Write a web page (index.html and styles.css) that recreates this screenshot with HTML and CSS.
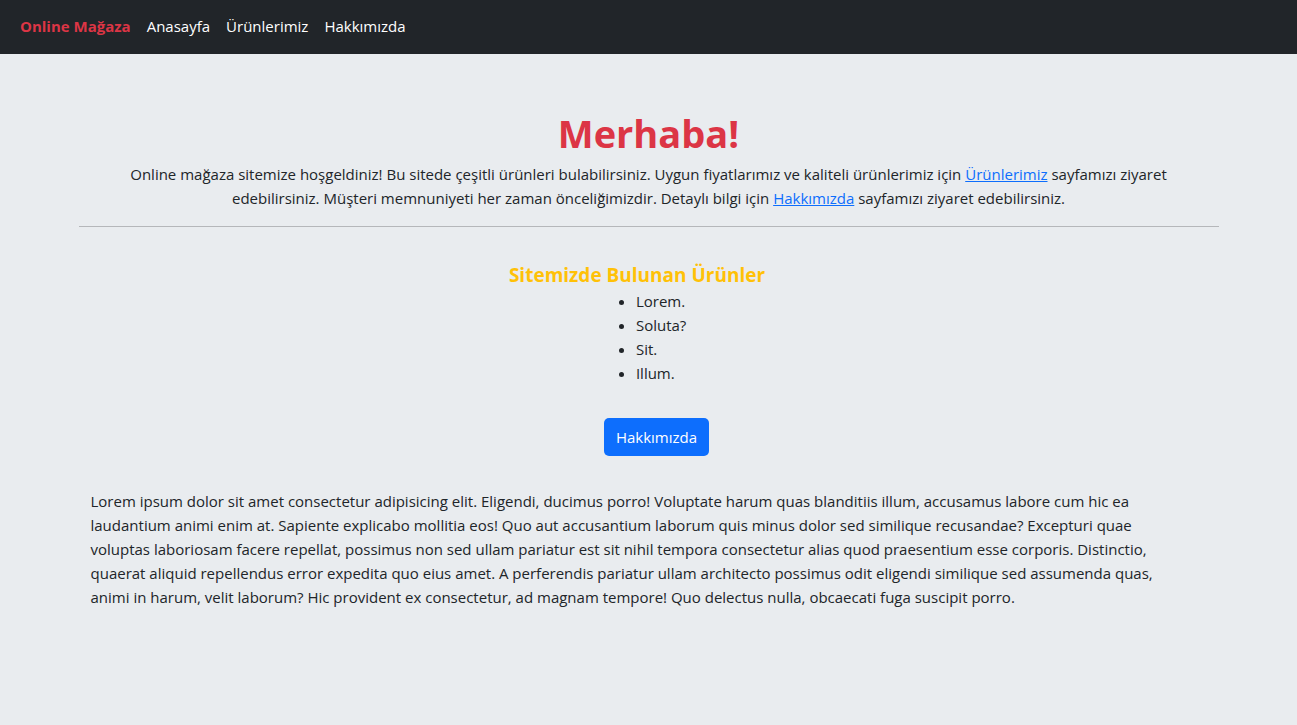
FILE: index.html
```html
<!DOCTYPE html>
<html lang="tr">
<head>
<meta charset="utf-8">
<title>Online Mağaza</title>
<link rel="stylesheet" href="styles.css">
</head>
<body>
<nav class="navbar">
  <a class="brand" href="#">Online Mağaza</a>
  <a class="nav-link" href="#">Anasayfa</a>
  <a class="nav-link" href="#">Ürünlerimiz</a>
  <a class="nav-link" href="#">Hakkımızda</a>
</nav>
<main class="container">
  <header class="hero">
    <h1 class="hero-title">Merhaba!</h1>
    <p class="hero-text">Online mağaza sitemize hoşgeldiniz! Bu sitede çeşitli ürünleri bulabilirsiniz. Uygun fiyatlarımız ve kaliteli ürünlerimiz için <a href="#">Ürünlerimiz</a> sayfamızı ziyaret edebilirsiniz. Müşteri memnuniyeti her zaman önceliğimizdir. Detaylı bilgi için <a href="#">Hakkımızda</a> sayfamızı ziyaret edebilirsiniz.</p>
  </header>
  <hr class="divider">
  <section class="products">
    <h5 class="products-title">Sitemizde Bulunan Ürünler</h5>
    <div class="products-body">
      <ul class="product-list">
        <li>Lorem.</li>
        <li>Soluta?</li>
        <li>Sit.</li>
        <li>Illum.</li>
      </ul>
      <a class="btn" href="#">Hakkımızda</a>
    </div>
  </section>
  <p class="lorem">Lorem ipsum dolor sit amet consectetur adipisicing elit. Eligendi, ducimus porro! Voluptate harum quas blanditiis illum, accusamus labore cum hic ea laudantium animi enim at. Sapiente explicabo mollitia eos! Quo aut accusantium laborum quis minus dolor sed similique recusandae? Excepturi quae voluptas laboriosam facere repellat, possimus non sed ullam pariatur est sit nihil tempora consectetur alias quod praesentium esse corporis. Distinctio, quaerat aliquid repellendus error expedita quo eius amet. A perferendis pariatur ullam architecto possimus odit eligendi similique sed assumenda quas, animi in harum, velit laborum? Hic provident ex consectetur, ad magnam tempore! Quo delectus nulla, obcaecati fuga suscipit porro.</p>
</main>
</body>
</html>
```

FILE: styles.css
```css
* { box-sizing: border-box; }
html, body { margin: 0; }
body {
  background: #e9ecef;
  color: #212529;
  font-family: "Open Sans", "Noto Sans", sans-serif;
  font-size: 15px;
  line-height: 24px;
}
.navbar {
  height: 54px;
  background: #212529;
  display: flex;
  align-items: center;
  gap: 16px;
  padding: 0 20px 2px;
}
.navbar a { text-decoration: none; font-size: 15px; }
.brand { color: #dc3545; font-weight: 700; }
.nav-link { color: #ffffff; }
.container {
  width: 1140px;
  margin: 0 auto;
  padding: 55px 12px 0;
}
.hero { text-align: center; }
.hero-title {
  margin: 0 0 5px;
  font-size: 38px;
  line-height: 48px;
  font-weight: 700;
  color: #dc3545;
}
.hero-text { margin: 0 0 16px; }
.hero-text a { color: #0d6efd; }
.divider {
  margin: 0 -12px;
  border: 0;
  border-top: 1px solid #b5b7ba;
}
.products {
  margin-top: 36px;
  display: flex;
  flex-direction: column;
  align-items: center;
}
.products-title {
  margin: 0 0 2px;
  padding-right: 23px;
  font-size: 19px;
  line-height: 24px;
  font-weight: 700;
  color: #ffc107;
}
.products-body {
  display: flex;
  flex-direction: column;
  align-items: flex-start;
  margin-left: 16px;
}
.product-list {
  margin: 0;
  padding-left: 32px;
}
.btn {
  margin-top: 33px;
  display: inline-block;
  padding: 7px 12px;
  background: #0d6efd;
  color: #fff;
  border-radius: 5px;
  text-decoration: none;
}
.lorem {
  margin: 33px 0 0;
  padding-right: 30px;
}
```
